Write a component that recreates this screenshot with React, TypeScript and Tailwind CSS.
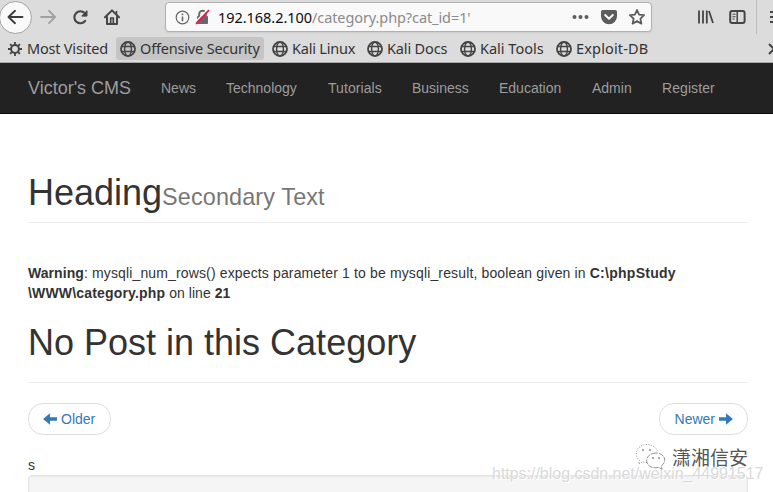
import React from "react";

const chromeFont = "font-['Noto_Sans','Open_Sans',sans-serif]";

function Globe() {
  return (
    <svg width="16" height="16" viewBox="0 0 16 16" fill="none" stroke="#454545" strokeWidth="1.8" className="shrink-0">
      <circle cx="8" cy="8" r="7" />
      <ellipse cx="8" cy="8" rx="3.4" ry="7" strokeWidth="1.4" />
      <path d="M1.5 5.5h13M1.5 10.5h13" strokeWidth="1.4" />
    </svg>
  );
}

function Gear() {
  return (
    <svg width="14" height="14" viewBox="0 0 14 14" fill="none" stroke="#454545" className="shrink-0">
      <circle cx="7" cy="7" r="3.9" strokeWidth="2" />
      <path d="M7 0v3M7 11v3M0 7h3M11 7h3M2.1 2.1l2 2M9.9 9.9l2 2M2.1 11.9l2-2M9.9 4.1l2-2" strokeWidth="1.8" />
    </svg>
  );
}

const bookmarks = [
  { label: "Offensive Security", box: "w-[148px] mr-1 bg-[#c5c5c5]", text: "tracking-[-0.18px]" },
  { label: "Kali Linux", box: "w-[95px]", text: "tracking-[-0.22px]" },
  { label: "Kali Docs", box: "w-[93px]", text: "tracking-[-0.15px]" },
  { label: "Kali Tools", box: "w-[96px]", text: "tracking-[0px]" },
  { label: "Exploit-DB", box: "w-[100px]", text: "tracking-[0.16px]" },
];

function Toolbar() {
  return (
    <div className="flex h-[34px] items-center overflow-hidden">
      <div className="-ml-[1px] flex h-[33px] w-[33px] shrink-0 items-center justify-center rounded-full border border-[#a2a2a2] bg-[#f9f9f9]">
        <svg width="17" height="16" viewBox="0 0 17 16" fill="none" stroke="#3d3d3d" strokeWidth="1.9" strokeLinecap="round" strokeLinejoin="round">
          <path d="M8 1.8 1.5 8 8 14.2M2 8h13.5" />
        </svg>
      </div>
      <svg className="ml-[8px] shrink-0" width="16" height="16" viewBox="0 0 16 16" fill="none" stroke="#a0a0a0" strokeWidth="1.8" strokeLinecap="round" strokeLinejoin="round">
        <path d="m9 1.8 6 6.2-6 6.2M1 8h13.5" />
      </svg>
      <svg className="ml-[16px] shrink-0" width="17" height="16" viewBox="0 0 17 16" fill="none" stroke="#454545" strokeWidth="2.1" strokeLinecap="round">
        <path d="M13.2 11.8A6 6 0 1 1 12.7 4.1" />
        <path d="M15 1.2v6H9Z" fill="#454545" stroke="none" />
        <path d="M15 2v5h-4.5" strokeWidth="1" />
      </svg>
      <svg className="ml-[15px] shrink-0" width="16" height="16" viewBox="0 0 16 16" fill="none" stroke="#454545" strokeWidth="2" strokeLinecap="round" strokeLinejoin="round">
        <path d="M1 8.2 8 1.4l7 6.8M3 8v7h10V8" />
        <path d="M6.7 15V9.2h2.6V15" strokeWidth="1.7" />
        <path d="M12.5 2.5v2" strokeWidth="1.6" />
      </svg>
      <div className="ml-[45px] flex h-[30px] w-[487px] shrink-0 items-center rounded-[4px] border border-[#b1b1b1] bg-[#f9f9f9] shadow-[0_1px_2px_rgba(0,0,0,0.08)]">
        <svg className="ml-[9px] shrink-0" width="15" height="15" viewBox="0 0 15 15" fill="none" stroke="#686868" strokeWidth="1.2">
          <circle cx="7.5" cy="7.5" r="6.3" />
          <path d="M7.5 6.5v4.8M7.5 3.6v1.7" strokeWidth="1.6" />
        </svg>
        <svg className="ml-[5px] shrink-0" width="15" height="16" viewBox="0 0 15 16" fill="none">
          <path d="M4.2 8V5a3.3 3.3 0 0 1 6.6 0v3" stroke="#686868" strokeWidth="2" />
          <rect x="2" y="7" width="11" height="8" rx="1" fill="#686868" />
          <path d="M0 13.2 13 .2" stroke="#f9f9f9" strokeWidth="1.4" />
          <path d="M1 14.8 14 1.2" stroke="#f0164a" strokeWidth="1.8" />
        </svg>
        <span className={`${chromeFont} ml-[8px] w-[340px] whitespace-nowrap text-[14.5px] leading-[20px] text-[#8b8b8b]`}>
          <span className="tracking-[-0.05px] text-[#0c0c0c]">192.168.2.100</span>
          <span className="tracking-[-0.09px]">/category.php?cat_id=1'</span>
        </span>
        <svg className="ml-[14px] shrink-0" width="17" height="16" viewBox="0 0 17 16" fill="#5c5c5c">
          <circle cx="2.5" cy="8" r="2" /><circle cx="8.5" cy="8" r="2" /><circle cx="14.5" cy="8" r="2" />
        </svg>
        <svg className="ml-[12px] shrink-0" width="16" height="16" viewBox="0 0 16 16">
          <path d="M1.8 1h12.4A1.8 1.8 0 0 1 16 2.8v4.5a8 8 0 0 1-16 0V2.8A1.8 1.8 0 0 1 1.8 1Z" fill="#5c5c5c" />
          <path d="m4.2 6 3.8 3.8L11.8 6" fill="none" stroke="#f9f9f9" strokeWidth="2" strokeLinecap="round" strokeLinejoin="round" />
        </svg>
        <svg className="ml-[12px] shrink-0" width="16" height="16" viewBox="0 0 16 16" fill="none" stroke="#5c5c5c" strokeWidth="1.8" strokeLinejoin="round">
          <path d="m8 1 2.1 4.6 5 .6-3.7 3.4 1 5L8 12.1l-4.4 2.5 1-5L.9 6.2l5-.6Z" />
        </svg>
      </div>
      <svg className="ml-[46px] shrink-0" width="16" height="16" viewBox="0 0 16 16" stroke="#454545" fill="none" strokeWidth="1.8">
        <path d="M1 1.5v13M5 1.5v13M8.8 1.5v13M11 2l4 12" />
      </svg>
      <svg className="ml-[15px] shrink-0" width="17" height="16" viewBox="0 0 17 16" stroke="#454545" fill="none">
        <rect x="1.2" y="2" width="14.4" height="12" rx="2" strokeWidth="2" />
        <path d="M8.2 2v12" strokeWidth="1.5" /><path d="M3.5 5.2h3M3.5 7.7h3M3.5 10h2" />
      </svg>
      <div className="ml-[10px] h-[34px] w-px shrink-0 bg-[#bdbdbd]" />
      <svg className="ml-[13px] shrink-0" width="14" height="16" viewBox="0 0 14 16" stroke="#454545" strokeWidth="2">
        <path d="M0 3h14M0 8h14M0 13h14" />
      </svg>
    </div>
  );
}

const links = [
  { label: "News", w: "w-[65px]" },
  { label: "Technology", w: "w-[102px]" },
  { label: "Tutorials", w: "w-[84px] tracking-[0.08px]" },
  { label: "Business", w: "w-[87px]" },
  { label: "Education", w: "w-[93px]" },
  { label: "Admin", w: "w-[70px]" },
  { label: "Register", w: "w-[83px] tracking-[0.08px]" },
];

function Arrow({ flip = false }: { flip?: boolean }) {
  return (
    <svg width="14" height="12" viewBox="0 0 14 12" fill="#337ab7" className={flip ? "-scale-x-100" : ""}>
      <path d="M0 6 7 .2V4.3h7v3.4H7v4.1Z" />
    </svg>
  );
}

export default function App() {
  return (
    <div className="relative h-[492px] w-[773px] overflow-hidden bg-white font-['Liberation_Sans',Arial,sans-serif] text-[14px] leading-[20px] text-[#333]">
      <header className="h-[63px] overflow-hidden border-b border-[#a9a9a9] bg-[#dcdcdc]">
        <Toolbar />
        <div className={`${chromeFont} flex h-[28px] items-center pt-px pl-[8px] text-[14.5px] text-[#333]`}>
          <div className="flex w-[108px] shrink-0 items-center gap-[5px]">
            <Gear />
            <span className="whitespace-nowrap pb-[2px] tracking-[-0.2px]">Most Visited</span>
          </div>
          {bookmarks.map((b) => (
            <div key={b.label} className={`flex h-[23px] shrink-0 items-center gap-1 rounded-[3px] pt-px pl-1 ${b.box}`}>
              <Globe />
              <span className={`whitespace-nowrap pb-[2px] ${b.text}`}>{b.label}</span>
            </div>
          ))}
          <svg className="ml-[116px] shrink-0" width="9" height="12" viewBox="0 0 9 12" fill="none" stroke="#454545" strokeWidth="2">
            <path d="m1 1 5 5-5 5" />
          </svg>
        </div>
      </header>
      <nav className="flex h-[51px] items-center border-b border-[#080808] bg-[#222] pl-[28px] text-[#9d9d9d]">
        <span className="w-[133px] shrink-0 text-[18px]">Victor's CMS</span>
        {links.map((l) => (
          <span key={l.label} className={`shrink-0 ${l.w}`}>{l.label}</span>
        ))}
      </nav>
      <main className="px-[28px] pr-[25px] pt-[59px]">
        <h1 className="h-[50px] border-b border-[#eee] text-[36px] leading-[40px]">
          Heading<small className="text-[23.4px] tracking-[0.13px] text-[#777]">Secondary Text</small>
        </h1>
        <p className="mt-[40px] whitespace-nowrap">
          <b className="tracking-[0.06px]">Warning</b>
          <span className="tracking-[0.14px]">: mysqli_num_rows() expects parameter 1 to be mysqli_result, boolean given in </span>
          <b className="tracking-[0.27px]">C:\phpStudy</b>
          <br />
          <b className="tracking-[0.17px]">\WWW\category.php</b>
          <span className="tracking-[0.06px]"> on line </span>
          <b>21</b>
        </p>
        <h1 className="mt-[20px] h-[60px] border-b border-[#eee] text-[36px] leading-[40px]">No Post in this Category</h1>
        <div className="mt-[20px] flex justify-between text-[#337ab7]">
          <span className="flex h-[32px] w-[83px] items-center gap-[4px] rounded-[15px] border border-[#ddd] pl-[14px]"><Arrow />Older</span>
          <span className="flex h-[32px] w-[89px] items-center justify-end gap-[4px] rounded-[15px] border border-[#ddd] pr-[14px]">Newer<Arrow flip /></span>
        </div>
        <p className="mt-[20px]">s</p>
        <div className="h-[60px] rounded-[4px] border border-[#e3e3e3] bg-[#f5f5f5] shadow-[inset_0_1px_1px_rgba(0,0,0,0.05)]" />
      </main>
      <div className="absolute left-[492px] top-[464px] whitespace-nowrap text-[16px] tracking-[-0.02px] text-[#dadada] [text-shadow:1px_1px_0_#fff]">
        https://blog.csdn.net/weixin_44991517
      </div>
      <div className="absolute left-[635px] top-[443px] flex items-center">
        <svg width="32" height="28" viewBox="0 0 32 28" fill="none" stroke="#777" strokeWidth=".8">
          <path d="M12 19.5c-2 0-3-.2-4.5-.7L3.5 21l1-3.7C-1.5 12 1 2 12 1.5c5 0 9.5 3 10.5 7" fill="#fff" strokeDasharray="1 1.5" />
          <path d="M21 10c-5 0-9.3 3-9.3 7.6 0 5.6 6.2 8.5 12 6.7l3.3 2-.7-3.3C33 18 29 10 21 10Z" fill="#fff" strokeDasharray="5 1" />
          <path d="M7 7h2M14 7h2M17 15h2M23 15h2" stroke="#555" strokeWidth="1.1" />
        </svg>
        <span className="ml-[5px] whitespace-nowrap font-['Noto_Sans_CJK_SC',sans-serif] text-[19px] leading-[28px] text-[#555] [text-shadow:-1px_-1px_0_#fff]">潇湘信安</span>
      </div>
    </div>
  );
}
